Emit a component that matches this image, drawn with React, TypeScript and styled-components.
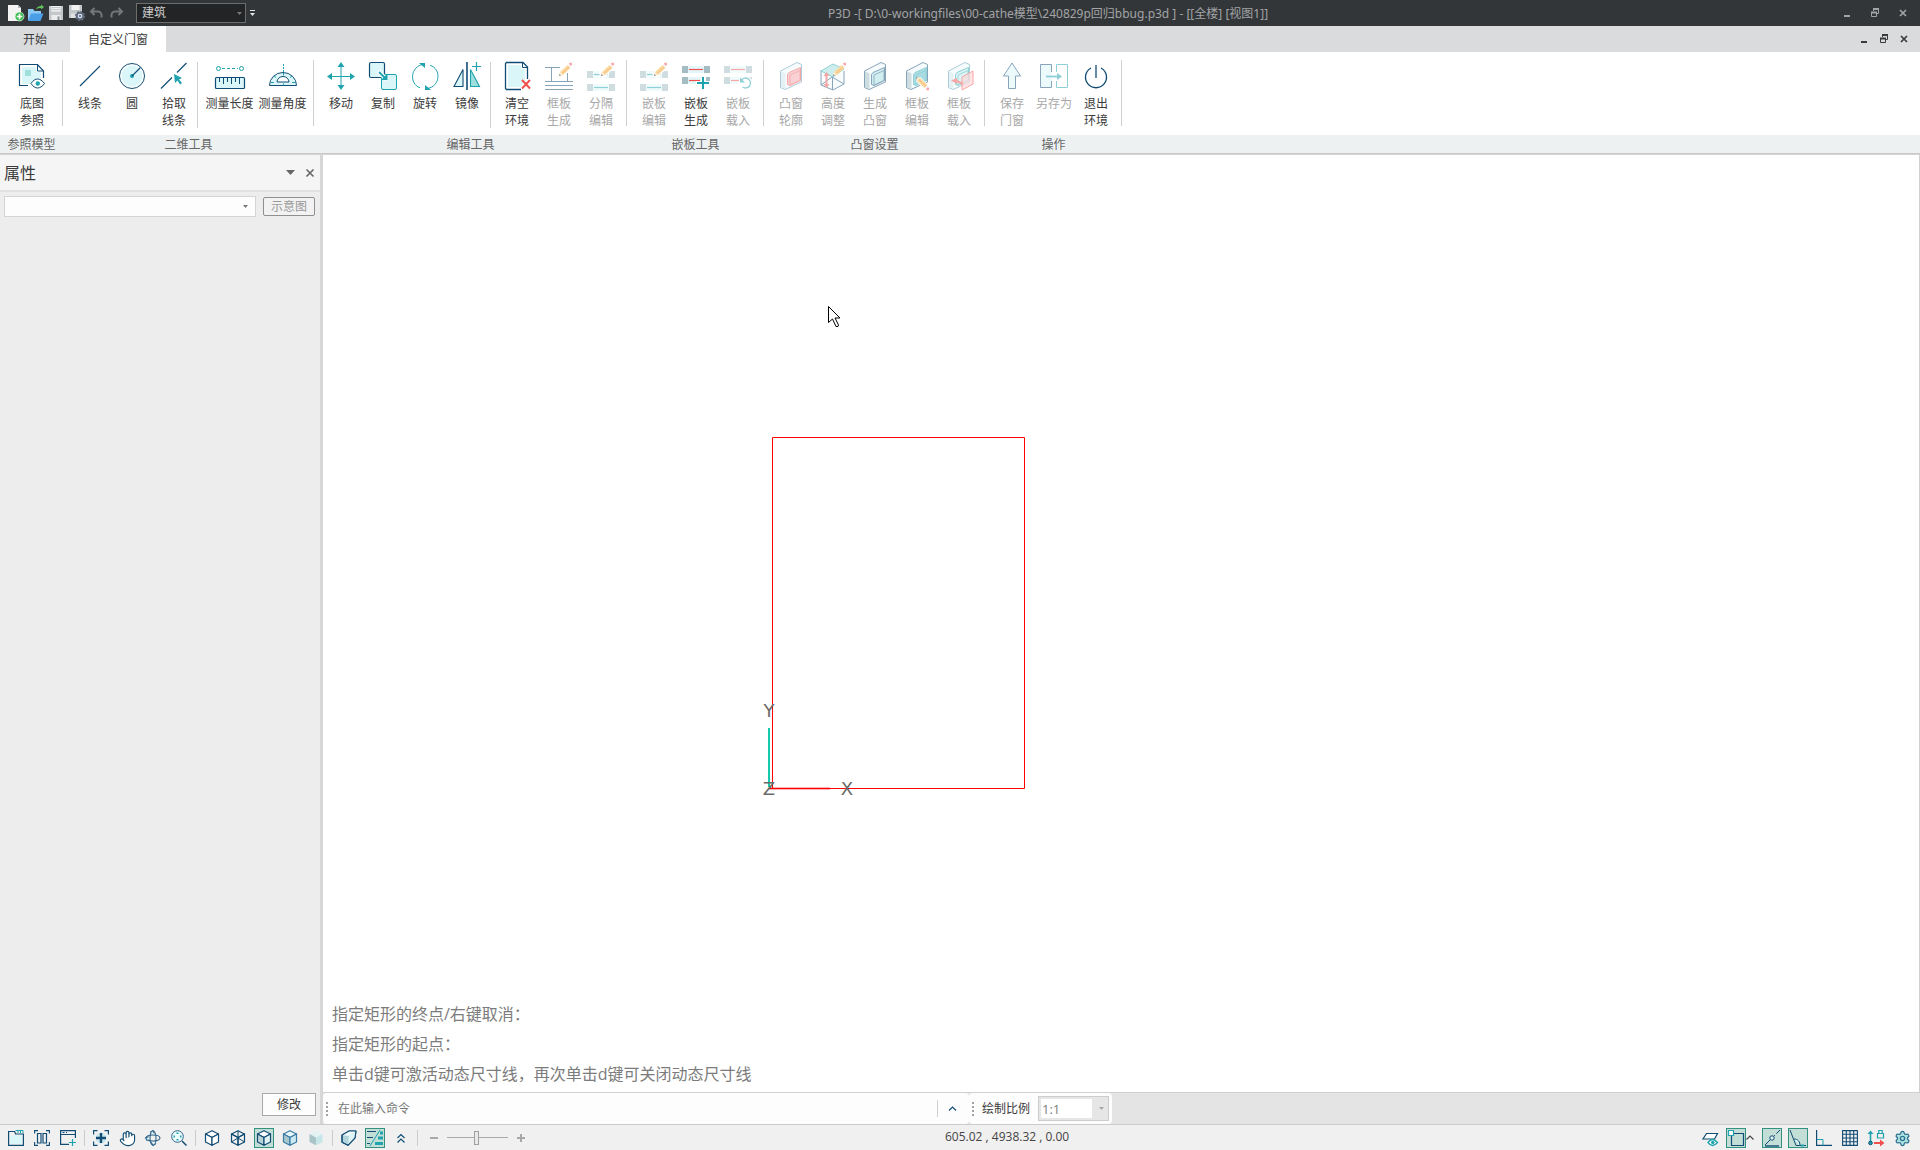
import React from "react";
import styled, { createGlobalStyle, css } from "styled-components";
import { Hand, Settings } from "lucide-react";

const NAVY = "#114c74";
const TEAL = "#1fa3ae";
const PALE = "#dbf6f9";
const MINT = "#9fdfdc";
const RED = "#f05050";

const GlobalStyle = createGlobalStyle`
  * { box-sizing: border-box; }
  html, body { margin: 0; padding: 0; }
  body {
    font-family: "Open Sans", "Noto Sans CJK SC", sans-serif;
    font-size: 12px;
    line-height: 16px;
    color: #3a3a3a;
    overflow: hidden;
  }
  button, input, select { font: inherit; color: inherit; margin: 0; }
`;

const Window = styled.div`
  display: flex;
  flex-direction: column;
  height: 100vh;
  background: #ededed;
`;

const PlainButton = styled.button`
  display: flex;
  align-items: center;
  justify-content: center;
  border: 0;
  padding: 0;
  background: none;
  svg { display: block; overflow: visible; }
`;

/* ---------- title bar ---------- */

const TitleBar = styled.header`
  display: flex;
  align-items: center;
  flex: none;
  height: 26px;
  padding: 0 3px 0 6px;
  background: #323639;
  color: #a2a4a5;
`;

const QuickButton = styled(PlainButton)`
  width: 20px;
  height: 20px;
`;

const Picker = styled.div<{ $variant: "dark" | "light" | "scale" }>`
  display: grid;
  align-items: center;
  > * { grid-area: 1 / 1; }
  > svg { justify-self: end; margin-right: 4px; pointer-events: none; }
  select {
    appearance: none;
    width: 100%;
    height: 100%;
    border-radius: 0;
    outline: 0;
  }
  ${(p) =>
    p.$variant === "dark" &&
    css`
      width: 110px;
      height: 20px;
      margin: 0 4px 0 10px;
      select { border: 1px solid #6b6d6f; background: #222425; color: #ccc; padding: 0 5px; }
    `}
  ${(p) =>
    p.$variant === "light" &&
    css`
      flex: 1;
      height: 21px;
      > svg { margin-right: 8px; }
      select { border: 1px solid #d4d4d4; background: #fdfdfd; }
    `}
  ${(p) =>
    p.$variant === "scale" &&
    css`
      width: 71px;
      height: 25px;
      margin-left: 8px;
      > svg { margin-right: 5px; }
      select {
        border: 1px solid #cdcdcd;
        padding: 0 3px;
        font-size: 13px;
        background: linear-gradient(#fff, #fff) 2px 2px / 51px 19px no-repeat #e6e6e6;
        color: #808080;
      }
    `}
`;

const WindowTitle = styled.h1`
  flex: 1;
  margin: 0;
  padding: 1px 0 0 8px;
  text-align: center;
  font-family: "Noto Sans", "Noto Sans CJK SC", sans-serif;
  font-size: 12px;
  font-weight: 400;
  white-space: pre;
`;

const WindowButton = styled(PlainButton)<{ $width: number }>`
  width: ${(p) => p.$width}px;
  height: 20px;
`;

/* ---------- tabs and ribbon ---------- */

const TabBar = styled.nav`
  display: flex;
  align-items: center;
  flex: none;
  height: 26px;
  padding-right: 6px;
  background: #dadbdd;
`;

const Tab = styled.button<{ $active?: boolean }>`
  align-self: stretch;
  min-width: 70px;
  padding: 2px 18px 0;
  border: 0;
  background: ${(p) => (p.$active ? "#fff" : "transparent")};
`;

const TabSpacer = styled.div`
  flex: 1;
`;

const Ribbon = styled.section`
  display: flex;
  flex: none;
  height: 103px;
  background: linear-gradient(#fff 83px, #edf1f2 83px 101px, #c9c9c9 101px 102px, #d4d4d4 102px);
`;

const Group = styled.div`
  display: flex;
  flex-direction: column;
`;

const GroupTools = styled.div`
  display: flex;
  height: 83px;
  padding: 8px 0 9px 6px;
`;

const GroupName = styled.div`
  height: 18px;
  line-height: 20px;
  text-align: center;
  color: #666;
`;

const Divider = styled.div<{ $inner?: boolean }>`
  width: 1px;
  height: 66px;
  margin: ${(p) => (p.$inner ? "2px 5px 0 2px" : "0 0 0 4px")};
  background: #d0d0d0;
`;

const ToolButton = styled.button<{ $width: number }>`
  display: flex;
  flex-direction: column;
  align-items: center;
  width: ${(p) => p.$width}px;
  border: 0;
  padding: 2px 0 0;
  background: none;
  line-height: 17px;
  white-space: pre;
  svg { display: block; overflow: visible; margin-bottom: 5px; }
  &:disabled { color: #a8a8a8; }
  &:disabled svg { opacity: 0.5; }
`;

/* ---------- work area ---------- */

const Main = styled.main`
  display: flex;
  flex: 1;
  min-height: 0;
`;

const SidePanel = styled.aside`
  display: flex;
  flex-direction: column;
  flex: none;
  width: 323px;
  border-right: 3px solid #d6d6d6;
  background: #ededed;
`;

const PanelHeader = styled.div`
  display: flex;
  align-items: center;
  height: 37px;
  padding: 0 1px 0 4px;
  border-bottom: 2px solid #e2e2e2;
  background: #f5f5f5;
`;

const PanelTitle = styled.h2`
  flex: 1;
  margin: 0;
  font-size: 16px;
  font-weight: 400;
  line-height: 24px;
`;

const PanelIconButton = styled(PlainButton)`
  width: 19px;
  height: 20px;
`;

const PanelRow = styled.div`
  display: flex;
  align-items: center;
  gap: 7px;
  padding: 4px 5px 0 4px;
`;

const PreviewButton = styled.button`
  width: 52px;
  height: 19px;
  border: 1px solid #8f8f8f;
  border-radius: 2px;
  padding: 0;
  line-height: 16px;
  background: #f2f2f2;
  &:disabled { color: #999; }
`;

const PanelFooter = styled.div`
  display: flex;
  justify-content: flex-end;
  margin-top: auto;
  padding: 0 4px 8px;
`;

const ModifyButton = styled.button`
  width: 54px;
  height: 23px;
  border: 1px solid #a9a9a9;
  padding: 0;
  background: #fdfdfd;
`;

const Workspace = styled.div`
  display: flex;
  flex-direction: column;
  flex: 1;
  min-width: 0;
`;

const Canvas = styled.div`
  position: relative;
  display: flex;
  flex-direction: column;
  justify-content: flex-end;
  flex: 1;
  min-height: 0;
  overflow: hidden;
  border-right: 1px solid #d0d0d0;
  border-bottom: 1px solid #d0d0d0;
  background: #fff;
`;

const Drawing = styled.svg`
  position: absolute;
  inset: 0;
  width: 100%;
  height: 100%;
`;

const Messages = styled.ol`
  position: relative;
  list-style: none;
  margin: 0;
  padding: 0 9px 3px;
  font-size: 16px;
  line-height: 30px;
  color: #7c7c7c;
`;

const CommandRow = styled.div`
  display: flex;
  flex: none;
  height: 31px;
  background: #e4e4e4;
`;

const CommandBar = styled.form<{ $width?: number }>`
  display: flex;
  align-items: center;
  width: ${(p) => (p.$width ? `${p.$width}px` : "auto")};
  height: 31px;
  padding: 0 3px;
  border-radius: 4px;
  background: #fdfdfd;
`;

const Grip = styled.div`
  width: 2px;
  height: 14px;
  margin-right: 8px;
  background: repeating-linear-gradient(#a2a2a2 0 2px, transparent 2px 4px);
`;

const CommandInput = styled.input`
  flex: 1;
  min-width: 0;
  border: 0;
  padding: 0 2px;
  outline: 0;
  background: none;
  &::placeholder { color: #777; opacity: 1; }
`;

const CommandDivider = styled.div`
  width: 1px;
  height: 17px;
  background: #cfcfcf;
`;

const ExpandButton = styled(PlainButton)`
  width: 28px;
  height: 24px;
`;

/* ---------- status bar ---------- */

const StatusBar = styled.footer`
  display: flex;
  align-items: center;
  flex: none;
  height: 26px;
  padding: 0 5px 0 3px;
  border-top: 1px solid #cbcbcb;
  background: #f0f0f0;
`;

const StatusButton = styled(PlainButton)<{ $active?: boolean }>`
  width: 20px;
  height: 20px;
  margin: 0 3px;
  ${(p) =>
    p.$active &&
    css`
      background: #c3ddd7;
      box-shadow: inset 0 0 0 1px #35917f;
    `}
`;

const StatusDivider = styled.div`
  width: 1px;
  height: 16px;
  margin: 0 3px;
  background: #cccccc;
`;

const SnapGroup = styled.div`
  display: flex;
  align-items: center;
  margin: 0 5px 0 3px;
  ${StatusButton} { margin: 0; }
`;

const SnapMenuButton = styled(PlainButton)`
  width: 8px;
  height: 20px;
`;

const ZoomButton = styled(PlainButton)`
  width: 26px;
  height: 20px;
`;

const ZoomSlider = styled.input`
  appearance: none;
  width: 61px;
  height: 16px;
  margin: 0;
  background: linear-gradient(#a9a9a9, #a9a9a9) center / 100% 1px no-repeat;
  &::-webkit-slider-thumb {
    appearance: none;
    width: 5px;
    height: 14px;
    border: 1px solid #a0a0a0;
    background: #e9e9e9;
  }
`;

const Coordinates = styled.output`
  flex: 1;
  padding: 0 0 2px 411px;
  color: #444;
  white-space: pre;
`;

/* ---------- ribbon icons, 28 x 28 ---------- */

const Pencil = ({ flip }: { flip?: boolean }) => (
  <g transform={flip ? "translate(13 15)" : "translate(14 1)"}>
    <g transform={flip ? "matrix(1 0 0 -1 0 13)" : undefined}>
      <path d="M0 13l1-4 7.500-7 3 3-7.500 7z" fill="#f9b93a" />
      <path d="M1 9l3 3L0 13z" fill="#fbe3c0" />
      <path d="M0 13l.5-2 1.500 1.500z" fill="#111" />
      <path d="M3 10.500l7.200-6.800" stroke="#ef8a23" strokeWidth="1.200" />
      <path d="M8.500 2l3 3 .8-.8-3-3z" fill="#e9e9e9" />
      <path d="M9.800.8l1.200-1 2 0 0 2-1 1.200z" fill="#f0505a" />
    </g>
  </g>
);

const Blocks = ({ tops, line, short }: { tops: number[]; line: string; short?: boolean }) => (
  <>
    {tops.map((y, i) => (
      <g key={y}>
        <path d={`M6 ${y}h16v7H6z`} fill={PALE} opacity=".8" />
        <path d={`M0 ${y}h6v7H0z`} fill="#a3bdc2" />
        <path d={short && i === 1 ? `M24 ${y}h4v4h-4z` : `M22 ${y}h6v7h-6z`} fill="#a3bdc2" />
        <path d={`M7 ${y + 3.5}h${short && i === 1 ? 11 : 14}`} stroke={line} strokeWidth="1.200" />
      </g>
    ))}
  </>
);

const Slab = ({ inner, edge, dark }: { inner: string; edge: string; dark?: boolean }) => (
  <>
    <path d="M3.500 9L20 .5l4.500 2V20L8 27.500l-4.500-2z" fill="#eefbfc" stroke={dark ? NAVY : "#5d9ab5"} strokeLinejoin="round" />
    <path d="M4 9.500l4.500 1.800V27L4 25z" fill={dark ? "#9fbcc6" : "#cfe4ea"} />
    <path d="M10.500 12.500L12 10.500l11.500-5V18.500L13 23.500l-2.500-1z" fill={inner} stroke={edge} strokeLinejoin="round" />
    <path d="M13 13l10-4.500v10L13 23z" fill={inner} stroke={edge} strokeWidth=".8" />
  </>
);

const ribbonIcons: Record<string, React.ReactNode> = {
  reference: (
    <>
      <path d="M10 23.500H1.500v-21h18l6 6.500v7" fill="none" stroke={NAVY} strokeWidth="1.200" />
      <path d="M4 5h14v5h5v6l-8 3-4 3H4z" fill={PALE} />
      <path d="M19.500 2.500v6.500h6" fill="none" stroke={NAVY} />
      <path d="M7 8h6v6H7z" fill={MINT} />
      <path d="M13 21.500c4-6 9-6 13.500 0-4.500 6-9.500 6-13.500 0z" fill="#fff" stroke={NAVY} />
      <circle cx="19.800" cy="21.500" r="2.200" fill={TEAL} />
    </>
  ),
  line: <path d="M4 24L24 4" stroke={NAVY} strokeWidth="1.100" />,
  circle: (
    <>
      <circle cx="14" cy="14" r="12.500" fill="#fff" stroke={NAVY} />
      <circle cx="14" cy="14" r="10.500" fill={PALE} />
      <circle cx="14" cy="14" r="2" fill={TEAL} />
      <path d="M14 14l8.500-8.500" stroke={NAVY} strokeWidth="1.100" />
    </>
  ),
  pick: (
    <>
      <path d="M1 26.500l11-11M17 10.500l9.500-9.500" stroke={NAVY} strokeWidth="1.200" />
      <path d="M14 12l8 4-3 1.500 3 3.500-2 1.500-2.500-4-2.500 2.500z" fill={TEAL} />
    </>
  ),
  length: (
    <>
      <circle cx="2.500" cy="6.500" r="2" fill="none" stroke={TEAL} />
      <circle cx="25.500" cy="6.500" r="2" fill="none" stroke={TEAL} />
      <path d="M6 6.500h16" stroke={TEAL} strokeDasharray="3 2" />
      <rect x="-.5" y="15.500" width="29" height="11" rx="1" fill={PALE} stroke={NAVY} strokeWidth="1.200" />
      <path d="M3.500 16v4M7.500 16v6M11.500 16v4M15.500 16v6M19.500 16v4M23.500 16v6" stroke={NAVY} />
    </>
  ),
  angle: (
    <>
      <path d="M14.500 2v8" stroke={TEAL} strokeDasharray="2 1" />
      <path d="M.5 23.500a13.500 13 0 0 1 27 0z" fill={PALE} stroke={NAVY} strokeLinejoin="round" />
      <path d="M8 20a6 5.500 0 0 1 12 0z" fill="#fff" stroke={NAVY} />
      <path d="M2 20.500h3M23 20.500h3M5 14l2 1.500M23 14l-2 1.500M14.500 11v2.500M14.500 21.500v2" stroke={TEAL} />
    </>
  ),
  move: (
    <g fill={TEAL}>
      <path d="M3 14.500h22M14 3v22" stroke={TEAL} />
      <path d="M14 0l3.500 5h-7zM14 28l3.500-5h-7zM0 14.500l5-3.500v7zM28 14.500L23 11v7z" />
    </g>
  ),
  copy: (
    <>
      <rect x=".5" y=".5" width="15" height="15" rx="1.500" fill={PALE} stroke={NAVY} strokeWidth="1.200" />
      <rect x="12.500" y="12.500" width="15" height="15" rx="1.500" fill={PALE} stroke={TEAL} />
      <path d="M9 9l9 9" stroke="#fff" strokeWidth="4" />
      <path d="M10 10l6 6" stroke={TEAL} strokeWidth="1.800" />
      <path d="M18.500 18v-6.500l-6.500 6.500z" fill={TEAL} />
    </>
  ),
  rotate: (
    <>
      <path d="M13 2.200C-1 4-2 22 9 25.800M16 26.500C29 25 31 7 19 3.300" fill="none" stroke={TEAL} />
      <path d="M8 1h6v5zM20 28h-6v-5z" fill={TEAL} />
    </>
  ),
  mirror: (
    <>
      <path d="M10 7.500v17H1z" fill={PALE} stroke={NAVY} strokeWidth="1.100" />
      <path d="M14 0v28" stroke={NAVY} strokeWidth="1.600" />
      <path d="M17.500 7.500l9 17h-9z" fill={MINT} stroke={TEAL} strokeWidth="1.100" />
      <path d="M23.500 0v9M19 4.500h9" stroke={TEAL} strokeWidth="1.200" />
    </>
  ),
  clear: (
    <>
      <path d="M18 27.500H3.500l-1-1v-25l1-1H20l4.500 4.500V17" fill="#fff" stroke={NAVY} strokeWidth="1.300" />
      <path d="M5 3h13v4h4v11l-4 7H5z" fill={PALE} />
      <path d="M19.500 1v4.500h5" fill="none" stroke={NAVY} />
      <path d="M19 18l8 8.500M27 18l-8 8.500" stroke={RED} strokeWidth="2" />
    </>
  ),
  frameMake: (
    <>
      <path d="M0 5.500h15M6.500 6v13.500M22.500 11v8.500M0 19.500h28M0 23.500h28M0 27.500h28" stroke={NAVY} fill="none" />
      <Pencil />
    </>
  ),
  splitEdit: (
    <>
      <Blocks tops={[9, 22]} line={TEAL} />
      <path d="M14 14L25 3" stroke="#fff" strokeWidth="7" />
      <Pencil />
    </>
  ),
  panelMake: (
    <>
      <Blocks tops={[4, 15]} line={RED} short />
      <path d="M21 14v14M14 21h14" stroke="#fff" strokeWidth="4" />
      <path d="M21 15v12M15 21h12" stroke={TEAL} strokeWidth="2" />
    </>
  ),
  panelLoad: (
    <>
      <Blocks tops={[4, 15]} line={RED} short />
      <circle cx="21.500" cy="21" r="7" fill="#fff" />
      <path d="M17.500 18a5 5 0 1 1 1 7" fill="none" stroke={TEAL} strokeWidth="1.300" />
      <path d="M16 15.500v5h5z" fill={TEAL} />
    </>
  ),
  bayOutline: <Slab inner="#f5a5ab" edge={RED} />,
  height: (
    <>
      <path d="M2 8v15l12 5 11-6V9" fill="#f3fbfc" stroke={NAVY} />
      <path d="M2 9l12-7 11 5-11 8z" fill={MINT} stroke={TEAL} />
      <path d="M2 23l11-8 12 7M13.500 15v13" fill="none" stroke={NAVY} />
      <path d="M7.500 13v10" stroke={RED} strokeWidth="2" />
      <path d="M7.500 10l3 4h-6zM7.500 26l3-4h-6z" fill={RED} />
      <Pencil />
    </>
  ),
  bayMake: <Slab inner="#a5dfe2" edge={NAVY} dark />,
  bayEdit: (
    <>
      <Slab inner="#57b9c6" edge={TEAL} dark />
      <path d="M15 17l10 10" stroke="#fff" strokeWidth="6" />
      <Pencil flip />
    </>
  ),
  bayLoad: (
    <>
      <Slab inner="#bdeaec" edge={TEAL} />
      <path d="M17 15l11-6v13l-11 6z" fill="#ffb7bb" fillOpacity=".7" stroke={RED} />
      <path d="M18 22l-8-4" stroke={RED} strokeWidth="2" />
      <path d="M6 18.500l6-2.500v6z" fill={RED} />
    </>
  ),
  save: <path d="M14 1l8.500 13H17.500v12.500h-7V14h-5z" fill={PALE} stroke={NAVY} strokeLinejoin="round" />,
  saveAs: (
    <>
      <path d="M11.500 10V2.500H.5v23h11V19" fill={PALE} stroke={NAVY} />
      <path d="M16.500 10V2.500h11v23h-11V19" fill="#fff" stroke={TEAL} />
      <path d="M6 14.500h12" stroke={TEAL} strokeWidth="1.800" />
      <path d="M22 14.500L17 11v7z" fill={TEAL} />
    </>
  ),
  exit: (
    <>
      <path d="M9 6a10.500 10.500 0 1 0 10 0" fill="none" stroke={NAVY} strokeWidth="1.300" />
      <path d="M14 3v13" stroke={NAVY} strokeWidth="1.300" />
    </>
  ),
};

type Tool = { icon: string; label: string; off?: boolean; width?: number };
type Item = Tool | "divider";

const groups: { name: string; items: Item[] }[] = [
  { name: "参照模型", items: [{ icon: "reference", label: "底图\n参照", width: 52 }] },
  {
    name: "二维工具",
    items: [
      { icon: "line", label: "线条" },
      { icon: "circle", label: "圆" },
      { icon: "pick", label: "拾取\n线条" },
      "divider",
      { icon: "length", label: "测量长度", width: 53 },
      { icon: "angle", label: "测量角度", width: 53 },
    ],
  },
  {
    name: "编辑工具",
    items: [
      { icon: "move", label: "移动" },
      { icon: "copy", label: "复制" },
      { icon: "rotate", label: "旋转" },
      { icon: "mirror", label: "镜像" },
      "divider",
      { icon: "clear", label: "清空\n环境" },
      { icon: "frameMake", label: "框板\n生成", off: true },
      { icon: "splitEdit", label: "分隔\n编辑", off: true },
    ],
  },
  {
    name: "嵌板工具",
    items: [
      { icon: "splitEdit", label: "嵌板\n编辑", off: true },
      { icon: "panelMake", label: "嵌板\n生成" },
      { icon: "panelLoad", label: "嵌板\n载入", off: true },
    ],
  },
  {
    name: "凸窗设置",
    items: [
      { icon: "bayOutline", label: "凸窗\n轮廓", off: true },
      { icon: "height", label: "高度\n调整", off: true },
      { icon: "bayMake", label: "生成\n凸窗", off: true },
      { icon: "bayEdit", label: "框板\n编辑", off: true },
      { icon: "bayLoad", label: "框板\n载入", off: true },
    ],
  },
  {
    name: "操作",
    items: [
      { icon: "save", label: "保存\n门窗", off: true },
      { icon: "saveAs", label: "另存为", off: true },
      { icon: "exit", label: "退出\n环境" },
    ],
  },
];

/* ---------- small icons ---------- */

const Icon = ({ size = 16, children }: { size?: number; children: React.ReactNode }) => (
  <svg width={size} height={size} viewBox={`0 0 ${size} ${size}`} fill="none" aria-hidden="true">
    {children}
  </svg>
);

const Caret = ({ color, wide }: { color: string; wide?: boolean }) => (
  <svg width={wide ? 9 : 5} height={wide ? 5 : 3} viewBox="0 0 8 5" preserveAspectRatio="none" aria-hidden="true">
    <path d="M0 0h8L4 5z" fill={color} />
  </svg>
);

const quickIcons: [string, React.ReactNode][] = [
  ["新建", <><path d="M0 0h10l3 3v13H0z" fill="#f3f3f3" /><path d="M10 0v3h3z" fill="#bbb" /><circle cx="11.500" cy="11.500" r="4.500" fill="#41bd55" stroke="#fff" strokeWidth=".6" /><path d="M11.500 8.800v5.400M8.800 11.500h5.400" stroke="#fff" strokeWidth="1.600" /></>],
  ["打开", <><path d="M0 4h5l1.500 2H13v9H0z" fill="#8ec9f3" /><path d="M3 8.500h12.500L12.500 16H0z" fill="#4a9ee6" /><path d="M8 4.500c1-3 3-3.500 5-3.500V-.5L16 2l-3 2.500V3c-2 0-3.500 0-5 1.500z" fill="#62c35a" /></>],
  ["保存", <><path d="M1 1h14v14H1z" fill="#c3c7ca" /><path d="M3.500 1h9v5.500h-9z" fill="#f2f2f2" /><path d="M4 2.500h8M4 4.500h8" stroke="#b5b5b5" strokeWidth=".7" /><path d="M3.500 10h9v5h-9z" fill="#ececec" /><path d="M9.500 11.500h2V15h-2z" fill="#8c959c" /></>],
  ["另存", <><path d="M1 0h13v13H1z" fill="#c3c7ca" /><path d="M3.500 0h8v5h-8z" fill="#f2f2f2" /><path d="M3 8.500h8V13H3z" fill="#e2e2e2" /><circle cx="12" cy="11" r="3.300" fill="#dce3ee" stroke="#5f6b80" strokeWidth="2" /><circle cx="12" cy="11" r="4.500" stroke="#5f6b80" strokeWidth="1.200" strokeDasharray="1.800 1.700" /><circle cx="12" cy="11" r="1" fill="#4c566a" /></>],
  ["撤销", <path d="M6.500 3L3 6.500 6.500 10M3.500 6.500H10c2.500 0 4 2 3.500 6" stroke="#74777a" strokeWidth="2" />],
  ["重做", <path d="M10.500 3L14 6.500 10.500 10M13.500 6.500H7c-2.500 0-4 2-3.500 6" stroke="#74777a" strokeWidth="2" />],
];

const Minimize = () => <path d="M2 8h6" stroke="currentColor" strokeWidth="2" />;
const Restore = () => (
  <>
    <path d="M3.500 3V1h5v4.500H7" stroke="currentColor" />
    <path d="M3 1h6" stroke="currentColor" strokeWidth="2" />
    <path d="M1.500 4.500h5v4h-5z" stroke="currentColor" />
    <path d="M1 4.500h6" stroke="currentColor" strokeWidth="2" />
  </>
);
const Close = () => <path d="M2 2l6 6M8 2L2 8" stroke="currentColor" strokeWidth="1.700" />;

const windowActions: [string, React.ReactNode][] = [
  ["最小化", <Minimize />],
  ["还原", <Restore />],
  ["关闭", <Close />],
];

const Cube = ({ fill = ["none", "none", "none"], edge = NAVY, hidden }: { fill?: string[]; edge?: string; hidden?: boolean }) => (
  <g strokeLinejoin="round">
    <path d="M1.500 4L8 .7 14.500 4 8 7.500z" fill={fill[0]} stroke={edge} strokeWidth="1.200" />
    <path d="M1.500 4v8L8 15.300V7.500z" fill={fill[1]} stroke={edge} strokeWidth="1.200" />
    <path d="M14.500 4v8L8 15.300V7.500z" fill={fill[2]} stroke={edge} strokeWidth="1.200" />
    {hidden && <path d="M8 1v7M1.500 12L8 8l6.500 4" stroke={edge} />}
  </g>
);

type StatusItem = { label: string; icon: React.ReactNode; active?: boolean } | "divider";

const viewTools: StatusItem[] = [
  { label: "视图窗口", icon: <><path d="M.6 1.500h6l1 2.500h7.800v11.400H.6z" stroke={NAVY} strokeWidth="1.200" /><path d="M2 5.500h12V14H2z" fill={PALE} /><path d="M7.500.5H15v2.500M10 .5V3M12.500.5V3" stroke={TEAL} /></> },
  { label: "平铺窗口", icon: <><path d="M4 .6H.6v3M.6 12v3.400H4M12 .6h3.400v3M15.400 12v3.400H12" stroke={NAVY} strokeWidth="1.100" /><path d="M3.500 3.500h3.500v9.500H3.500zM9 3.500h3.500v9.500H9zM3 3.500h4.500M8.500 3.500H13" stroke={NAVY} strokeWidth="1.200" /></> },
  { label: "新建窗口", icon: <><path d="M9 14.400H.6V.6h14.800V8M.6 4.500h14.800" stroke={NAVY} strokeWidth="1.200" /><path d="M2.500 2.500h2M6 2.500h1" stroke={NAVY} /><path d="M12.500 9v7M9 12.500h7" stroke={TEAL} strokeWidth="1.200" /></> },
  "divider",
  { label: "全图显示", icon: <><circle cx="8" cy="8" r="5.500" fill="#cde9ee" /><path d="M4.500.6H.6v4M.6 11.500v3.900h3.900M11.500.6h3.900v4M15.400 11.500v3.900h-3.900" stroke={NAVY} strokeWidth="1.200" /><path d="M8 3v10M3 8h10" stroke={NAVY} strokeWidth="2.400" /></> },
  { label: "平移", icon: <Hand size={17} color={NAVY} strokeWidth={1.6} fill="#fff" /> },
  { label: "环绕", icon: <g stroke="#2c6288" strokeWidth="1.100"><ellipse cx="8" cy="8" rx="7" ry="3" fill="none" /><ellipse cx="8" cy="8" rx="3" ry="7" /><path d="M5 2.500L8 .6l1.500 3M11 13.500L8 15.400l-2-3M2.500 11L.6 8l3-1.500" fill="#cfeaf0" /></g> },
  { label: "缩放", icon: <><circle cx="6.500" cy="6.500" r="5.800" fill="#ecfbfc" stroke="#2c6288" /><path d="M11 11l4.500 4.500" stroke={NAVY} strokeWidth="1.500" /><path d="M6.500 2.500v1.500M6.500 9v1.500M2.500 6.500H4M9 6.500h1.500" stroke={TEAL} strokeWidth="2" /></> },
  "divider",
  { label: "线框", icon: <Cube fill={["#fff", "#fff", "#fff"]} /> },
  { label: "透明线框", icon: <Cube hidden /> },
  { label: "隐藏线", icon: <Cube fill={["#fff", "#b8d2d6", "#e2f3f5"]} />, active: true },
  { label: "着色带边", icon: <Cube fill={["#e9f8fa", "#a6c7ce", "#cdeaf0"]} edge="#3a7ca5" /> },
  { label: "着色", icon: <Cube fill={["#e3f2f3", "#a9c3c6", "#c6e6e9"]} edge="none" /> },
  "divider",
  { label: "剖切", icon: <g strokeLinejoin="round"><path d="M1 5l7-4h7l-1 7-7 7.300-6-3z" fill="#b4d5dc" stroke={NAVY} /><path d="M1 5l7-4h7L8 6z" fill="#f1fbfc" /><path d="M8 6l7-5-1 7-7 7z" fill="#dff4f7" /><path d="M1 5l7-4h7l-1 7-7 7.300-6-3z" stroke={NAVY} strokeWidth="1.200" /></g> },
  { label: "图层显示", icon: <><path d="M0 1.500h9M0 7.500h6M0 13.500h3" stroke={NAVY} strokeWidth="1.200" /><path d="M13 0L3 16" stroke={TEAL} /><path d="M13 3h3M11 8h5M8 13.500h8" stroke={TEAL} strokeWidth="3" /></>, active: true },
  { label: "展开", icon: <path d="M4.500 8L8 4.500 11.500 8M4.500 12.500L8 9l3.500 3.500" stroke={NAVY} strokeWidth="1.200" /> },
  "divider",
];

const draftTools: StatusItem[] = [
  { label: "极轴", icon: <><path d="M1 16h14L15 16" stroke={NAVY} strokeWidth="1.400" /><path d="M1 15L16 0" stroke={NAVY} strokeDasharray="9 2 3 2" /><circle cx="8" cy="8" r="2.200" fill="#e6f7f6" stroke={NAVY} /></>, active: true },
  { label: "追踪", icon: <><path d="M0 0l6 15.500h10" stroke={NAVY} /><path d="M4 9c4 0 6 3 6 6.500" fill={PALE} stroke={NAVY} /><path d="M11 15.500h3" stroke={TEAL} strokeWidth="2" /></>, active: true },
  { label: "正交", icon: <><path d="M.6 0v15.400H16" stroke={NAVY} strokeWidth="1.200" /><path d="M1 9.500h6v6" stroke={TEAL} /></> },
  { label: "栅格", icon: <path d="M.6.6h14.800v14.800H.6zM4.300 0v16M8 0v16M11.700 0v16M0 4.300h16M0 8h16M0 11.700h16" stroke={NAVY} strokeWidth="1.100" /> },
  { label: "坐标锁定", icon: <><path d="M2.500 13V3" stroke={TEAL} strokeWidth="1.600" /><path d="M-.5 4l3-3.500 3 3.500z" fill={TEAL} /><circle cx="2.500" cy="13" r="1.800" fill={TEAL} stroke={NAVY} /><path d="M6 13h7" stroke={RED} strokeWidth="2" /><path d="M12 9.500l4.500 3.500-4.500 3.500z" fill={RED} /><path d="M9.500 3.500h6v4.500h-6zM10.800 3.500V.5h3.400v3" stroke={TEAL} strokeWidth="1.200" /></> },
  { label: "设置", icon: <Settings size={17} color="#2c6f8e" fill="#aee3e2" strokeWidth={1.8} /> },
];

const StatusTools = ({ items }: { items: StatusItem[] }) => (
  <>
    {items.map((item, i) =>
      item === "divider" ? (
        <StatusDivider key={i} />
      ) : (
        <StatusButton key={i} type="button" aria-label={item.label} $active={item.active}>
          <Icon>{item.icon}</Icon>
        </StatusButton>
      )
    )}
  </>
);

const ChevronUp = ({ color, width }: { color: string; width: number }) => (
  <svg width={width} height="5" viewBox="0 0 8 5" fill="none" aria-hidden="true">
    <path d="M.5 4.500L4 1l3.500 3.500" stroke={color} strokeWidth="1.200" />
  </svg>
);

export default function App() {
  return (
    <Window>
      <GlobalStyle />
      <TitleBar>
        {quickIcons.map(([label, icon]) => (
          <QuickButton key={label} type="button" aria-label={label}>
            <Icon>{icon}</Icon>
          </QuickButton>
        ))}
        <Picker $variant="dark">
          <select aria-label="专业">
            <option>建筑</option>
          </select>
          <Caret color="#77797b" />
        </Picker>
        <PlainButton type="button" aria-label="自定义快速访问工具栏">
          <svg width="5" height="6" viewBox="0 0 5 6" aria-hidden="true">
            <path d="M0 0h5v1H0zM0 3h5L2.500 6z" fill="#e6e6e6" />
          </svg>
        </PlainButton>
        <WindowTitle>{"P3D -[ D:\\0-workingfiles\\00-cathe模型\\240829p回归bbug.p3d ] - [[全楼] [视图1]]"}</WindowTitle>
        {windowActions.map(([label, icon]) => (
          <WindowButton key={label} type="button" aria-label={label} $width={28}>
            <Icon size={10}>{icon}</Icon>
          </WindowButton>
        ))}
      </TitleBar>

      <TabBar>
        <Tab type="button">开始</Tab>
        <Tab type="button" $active>
          自定义门窗
        </Tab>
        <TabSpacer />
        {windowActions.map(([label, icon]) => (
          <WindowButton key={label} type="button" aria-label={`${label}视图`} $width={20}>
            <Icon size={10}>{icon}</Icon>
          </WindowButton>
        ))}
      </TabBar>

      <Ribbon>
        {groups.map((group) => (
          <Group key={group.name}>
            <GroupTools>
              {group.items.map((item, i) =>
                item === "divider" ? (
                  <Divider key={i} $inner />
                ) : (
                  <ToolButton key={i} type="button" disabled={item.off} $width={item.width ?? 42}>
                    <Icon size={28}>{ribbonIcons[item.icon]}</Icon>
                    {item.label}
                  </ToolButton>
                )
              )}
              <Divider />
            </GroupTools>
            <GroupName>{group.name}</GroupName>
          </Group>
        ))}
      </Ribbon>

      <Main>
        <SidePanel>
          <PanelHeader>
            <PanelTitle>属性</PanelTitle>
            <PanelIconButton type="button" aria-label="面板菜单">
              <Caret color="#666" wide />
            </PanelIconButton>
            <PanelIconButton type="button" aria-label="关闭面板">
              <Icon size={10}>
                <path d="M1.500 1.500l7 7M8.500 1.500l-7 7" stroke="#666" strokeWidth="1.600" />
              </Icon>
            </PanelIconButton>
          </PanelHeader>
          <PanelRow>
            <Picker $variant="light">
              <select aria-label="构件" />
              <Caret color="#777" />
            </Picker>
            <PreviewButton type="button" disabled>
              示意图
            </PreviewButton>
          </PanelRow>
          <PanelFooter>
            <ModifyButton type="button">修改</ModifyButton>
          </PanelFooter>
        </SidePanel>

        <Workspace>
          <Canvas>
            <Drawing fill="none" aria-label="绘图区">
              <path d="M449.500 282.500h252v351h-252z" stroke="#f00" />
              <path d="M446 573v59" stroke="#17c9ab" strokeWidth="2" />
              <path d="M446 633.500h61" stroke="#f00" strokeOpacity=".3" strokeWidth="3" />
              <path d="M446 633.500h61" stroke="#f00" />
              <g fill="#6a6a6a" fontFamily="DejaVu Sans, sans-serif" fontSize="18" textAnchor="middle">
                <text x="446" y="562">Y</text>
                <text x="446" y="640">Z</text>
                <text x="524" y="640">X</text>
              </g>
              <path d="M505.500 151.500v16l4-3.500 3.500 7.500h2l.5-1.500-3.500-7h5z" fill="#fff" stroke="#000" />
            </Drawing>
            <Messages>
              <li>指定矩形的终点/右键取消：</li>
              <li>指定矩形的起点：</li>
              <li>单击d键可激活动态尺寸线，再次单击d键可关闭动态尺寸线</li>
            </Messages>
          </Canvas>
          <CommandRow>
            <CommandBar $width={646} onSubmit={(e) => e.preventDefault()}>
              <Grip />
              <CommandInput aria-label="命令" placeholder="在此输入命令" />
              <CommandDivider />
              <ExpandButton type="button" aria-label="展开命令记录">
                <ChevronUp color={NAVY} width={9} />
              </ExpandButton>
            </CommandBar>
            <CommandBar onSubmit={(e) => e.preventDefault()}>
              <Grip />
              <label htmlFor="scale">绘制比例</label>
              <Picker $variant="scale">
                <select id="scale">
                  <option>1:1</option>
                </select>
                <Caret color="#a8a8a8" />
              </Picker>
            </CommandBar>
          </CommandRow>
        </Workspace>
      </Main>

      <StatusBar>
        <StatusTools items={viewTools} />
        <ZoomButton type="button" aria-label="缩小">
          <Icon size={8}>
            <path d="M0 4h8" stroke="#a8a8a8" strokeWidth="2" />
          </Icon>
        </ZoomButton>
        <ZoomSlider type="range" aria-label="显示比例" defaultValue={48} />
        <ZoomButton type="button" aria-label="放大">
          <Icon size={8}>
            <path d="M0 4h8M4 0v8" stroke="#a8a8a8" strokeWidth="2" />
          </Icon>
        </ZoomButton>
        <Coordinates>605.02 , 4938.32 , 0.00</Coordinates>
        <StatusButton type="button" aria-label="工作平面">
          <Icon>
            <path d="M4.500 3.500h11l-3 5.500H1z" fill="#fff" stroke={NAVY} strokeWidth="1.200" />
            <path d="M6 12.500c3-4 6-4 9.500 0-3.500 4-6.500 4-9.500 0z" fill="#fff" stroke={TEAL} strokeWidth="1.300" />
            <circle cx="10.800" cy="12.500" r="1.700" fill={TEAL} />
          </Icon>
        </StatusButton>
        <SnapGroup>
          <StatusButton type="button" aria-label="对象捕捉" $active>
            <Icon>
              <path d="M3.500 3.500h12v12h-12z" stroke={NAVY} strokeWidth="1.200" />
              <path d="M.5.5h5v5h-5z" fill="#fff" stroke={TEAL} strokeWidth="1.200" />
            </Icon>
          </StatusButton>
          <SnapMenuButton type="button" aria-label="捕捉选项">
            <ChevronUp color="#444" width={8} />
          </SnapMenuButton>
        </SnapGroup>
        <StatusTools items={draftTools} />
      </StatusBar>
    </Window>
  );
}
